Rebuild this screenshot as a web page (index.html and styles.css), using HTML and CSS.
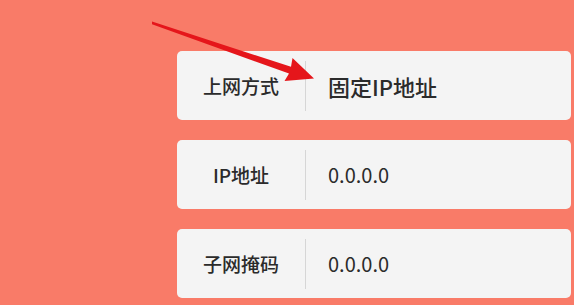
FILE: index.html
```html
<!DOCTYPE html>
<html>
<head>
    <meta charset="UTF-8">
    <meta name="viewport" content="width=device-width, initial-scale=1.0">
    <title>上网设置</title>
    <link rel="stylesheet" href="styles.css">
</head>
<body>
    <div class="form-list">
        <div class="row">
            <div class="label">上网方式</div>
            <div class="value big">固定IP地址</div>
        </div>
        <div class="row">
            <div class="label">IP地址</div>
            <div class="value">0.0.0.0</div>
        </div>
        <div class="row">
            <div class="label">子网掩码</div>
            <div class="value">0.0.0.0</div>
        </div>
    </div>

    <!-- red pointer drawn over the page -->
    <svg class="arrow" width="574" height="305" viewBox="0 0 574 305">
        <polygon points="152,21.6 291,66.8 292.5,58 314,78.5 284.5,81 289,73.6 152,24.2" fill="#e5161b"/>
    </svg>
</body>
</html>
```

FILE: styles.css
```css
body {
    margin: 0;
    background-color: #f97b68;
    font-family: "Noto Sans CJK SC", "Noto Sans", sans-serif;
    color: #2b2b2b;
}
.form-list {
    display: flex;
    flex-direction: column;
    gap: 20px;
    padding: 51px 3px 0 177px;
}
.row {
    display: flex;
    align-items: center;
    height: 69px;
    background: #f4f4f4;
    border-radius: 5px;
}
.label {
    width: 128px;
    height: 50px;
    display: flex;
    align-items: center;
    justify-content: center;
    font-size: 19px;
    font-weight: 500;
    border-right: 1px solid #d6d6d6;
}
.value {
    padding-left: 22px;
    font-size: 20px;
}
.value.big {
    font-size: 22px;
    font-weight: 500;
}
.arrow {
    position: absolute;
    left: 0;
    top: 0;
}
```
